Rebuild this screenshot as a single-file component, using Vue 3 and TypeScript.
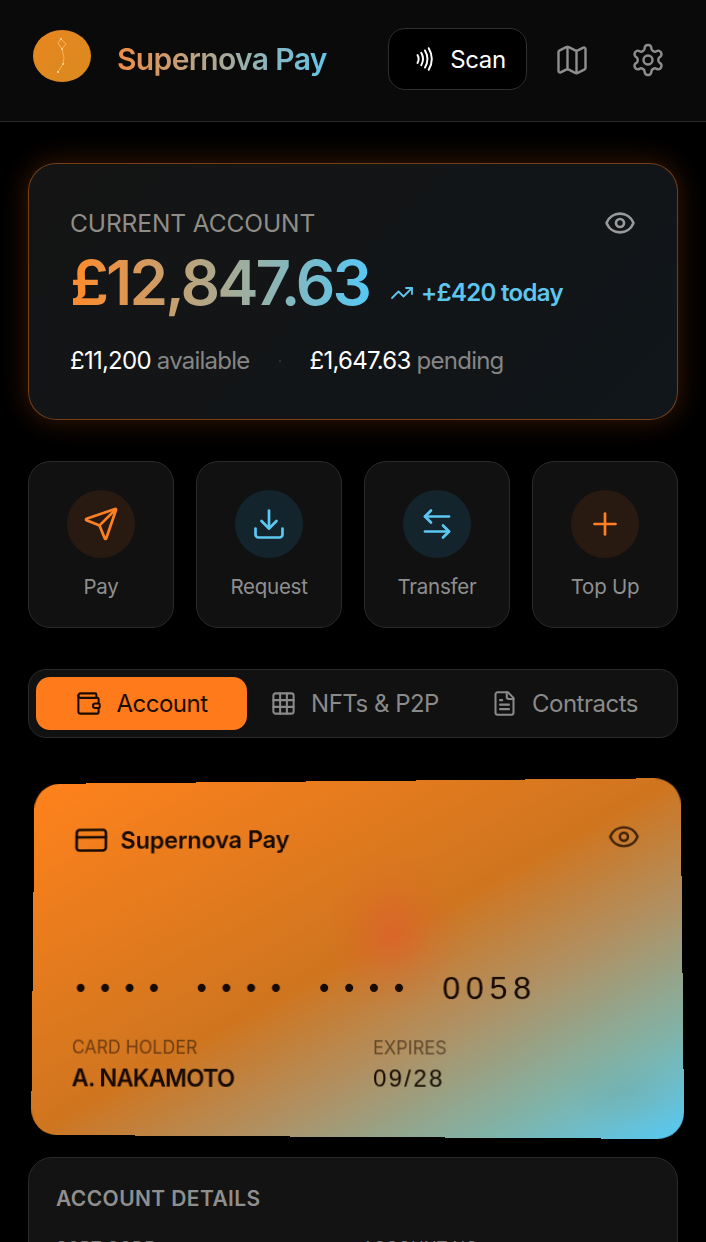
<script setup lang="ts">
interface Action {
  label: string
  tone: 'orange' | 'blue'
  paths: string[]
}

interface Tab {
  label: string
  active?: boolean
  paths: string[]
}

const eyePaths = [
  'M2.062 12.348a1 1 0 0 1 0-.696 10.75 10.75 0 0 1 19.876 0 1 1 0 0 1 0 .696 10.75 10.75 0 0 1-19.876 0',
  'M15 12a3 3 0 1 1-6 0 3 3 0 0 1 6 0',
]

const actions: Action[] = [
  {
    label: 'Pay',
    tone: 'orange',
    paths: [
      'M14.536 21.686a.5.5 0 0 0 .937-.024l6.5-19a.496.496 0 0 0-.635-.635l-19 6.5a.5.5 0 0 0-.024.937l7.93 3.18a2 2 0 0 1 1.112 1.11z',
      'm21.854 2.147-10.94 10.939',
    ],
  },
  {
    label: 'Request',
    tone: 'blue',
    paths: ['M21 15v4a2 2 0 0 1-2 2H5a2 2 0 0 1-2-2v-4', 'M7 10l5 5 5-5', 'M12 15V3'],
  },
  {
    label: 'Transfer',
    tone: 'blue',
    paths: ['M8 3 4 7l4 4', 'M4 7h16', 'm16 21 4-4-4-4', 'M20 17H4'],
  },
  {
    label: 'Top Up',
    tone: 'orange',
    paths: ['M5 12h14', 'M12 5v14'],
  },
]

const tabs: Tab[] = [
  {
    label: 'Account',
    active: true,
    paths: [
      'M19 7V4a1 1 0 0 0-1-1H5a2 2 0 0 0 0 4h15a1 1 0 0 1 1 1v4h-3a2 2 0 0 0 0 4h3a1 1 0 0 0 1-1v-2a1 1 0 0 0-1-1',
      'M3 5v14a2 2 0 0 0 2 2h15a1 1 0 0 0 1-1v-4',
    ],
  },
  {
    label: 'NFTs & P2P',
    paths: [
      'M5 3h14a2 2 0 0 1 2 2v14a2 2 0 0 1-2 2H5a2 2 0 0 1-2-2V5a2 2 0 0 1 2-2z',
      'M3 9h18',
      'M3 15h18',
      'M9 3v18',
      'M15 3v18',
    ],
  },
  {
    label: 'Contracts',
    paths: [
      'M15 2H6a2 2 0 0 0-2 2v16a2 2 0 0 0 2 2h12a2 2 0 0 0 2-2V7Z',
      'M14 2v4a2 2 0 0 0 2 2h4',
      'M10 9H8',
      'M16 13H8',
      'M16 17H8',
    ],
  },
]
</script>

<template>
  <div class="app">
    <header class="topbar">
      <svg class="logo" viewBox="0 0 58 52">
        <ellipse cx="29" cy="26" rx="29" ry="26" fill="url(#logoFill)" />
        <defs>
          <linearGradient id="logoFill" x1="0" y1="0" x2="1" y2="1">
            <stop offset="0" stop-color="#e8861f" />
            <stop offset="1" stop-color="#d98a20" />
          </linearGradient>
        </defs>
        <path d="M28 9l5 5-4 5 2 9-1 6-5 8M28 9l-3 4 4 6" fill="none" stroke="#ffc56e" stroke-width="0.7" />
        <circle cx="28" cy="9" r="0.9" fill="#ffe0a0" />
        <circle cx="29" cy="19" r="0.9" fill="#ffe0a0" />
        <circle cx="30" cy="34" r="0.9" fill="#ffe0a0" />
        <circle cx="25" cy="42" r="1.1" fill="#ffe0a0" />
      </svg>
      <span class="brand">Supernova Pay</span>
      <button class="scan">
        <svg class="icon-scan" viewBox="0 0 24 24">
          <path d="M6 8.32a7.43 7.43 0 0 1 0 7.36" />
          <path d="M9.46 6.21a11.76 11.76 0 0 1 0 11.58" />
          <path d="M12.91 4.1a15.91 15.91 0 0 1 .01 15.8" />
          <path d="M16.37 2a20.16 20.16 0 0 1 0 20" />
        </svg>
        Scan
      </button>
      <svg class="icon-top map" viewBox="0 0 24 24">
        <path d="M14.106 5.553a2 2 0 0 0 1.788 0l3.659-1.83A1 1 0 0 1 21 4.619v12.764a1 1 0 0 1-.553.894l-4.553 2.277a2 2 0 0 1-1.788 0l-4.212-2.106a2 2 0 0 0-1.788 0l-3.659 1.83A1 1 0 0 1 3 19.381V6.618a1 1 0 0 1 .553-.894l4.553-2.277a2 2 0 0 1 1.788 0z" />
        <path d="M15 5.764v15" />
        <path d="M9 3.236v15" />
      </svg>
      <svg class="icon-top" viewBox="0 0 24 24">
        <path d="M12.22 2h-.44a2 2 0 0 0-2 2v.18a2 2 0 0 1-1 1.73l-.43.25a2 2 0 0 1-2 0l-.15-.08a2 2 0 0 0-2.73.73l-.22.38a2 2 0 0 0 .73 2.73l.15.1a2 2 0 0 1 1 1.72v.51a2 2 0 0 1-1 1.74l-.15.09a2 2 0 0 0-.73 2.73l.22.38a2 2 0 0 0 2.73.73l.15-.08a2 2 0 0 1 2 0l.43.25a2 2 0 0 1 1 1.73V20a2 2 0 0 0 2 2h.44a2 2 0 0 0 2-2v-.18a2 2 0 0 1 1-1.73l.43-.25a2 2 0 0 1 2 0l.15.08a2 2 0 0 0 2.73-.73l.22-.39a2 2 0 0 0-.73-2.73l-.15-.08a2 2 0 0 1-1-1.74v-.5a2 2 0 0 1 1-1.74l.15-.09a2 2 0 0 0 .73-2.73l-.22-.38a2 2 0 0 0-2.73-.73l-.15.08a2 2 0 0 1-2 0l-.43-.25a2 2 0 0 1-1-1.73V4a2 2 0 0 0-2-2z" />
        <path d="M15 12a3 3 0 1 1-6 0 3 3 0 0 1 6 0" />
      </svg>
    </header>

    <main class="content">
      <section class="balance">
        <div class="balance-head">
          <span class="balance-label">CURRENT ACCOUNT</span>
          <svg class="balance-eye" viewBox="0 0 24 24">
            <path v-for="d in eyePaths" :key="d" :d="d" />
          </svg>
        </div>
        <div class="balance-row">
          <span class="amount">£12,847.63</span>
          <svg class="trend" viewBox="0 0 24 24">
            <path d="M22 7l-8.5 8.5-5-5L2 17" />
            <path d="M16 7h6v6" />
          </svg>
          <span class="today">+£420 today</span>
        </div>
        <div class="balance-foot">
          <span><b>£11,200</b> available</span>
          <i class="sep"></i>
          <span><b>£1,647.63</b> pending</span>
        </div>
      </section>

      <section class="actions">
        <button v-for="a in actions" :key="a.label" class="action">
          <span class="action-circle" :class="a.tone">
            <svg viewBox="0 0 24 24">
              <path v-for="d in a.paths" :key="d" :d="d" />
            </svg>
          </span>
          <span class="action-label">{{ a.label }}</span>
        </button>
      </section>

      <nav class="tabs">
        <button v-for="t in tabs" :key="t.label" class="tab" :class="{ active: t.active }">
          <svg viewBox="0 0 24 24">
            <path v-for="d in t.paths" :key="d" :d="d" />
          </svg>
          {{ t.label }}
        </button>
      </nav>

      <section class="card">
        <div class="card-head">
          <svg class="card-logo" viewBox="0 0 24 24">
            <path d="M4 5h16a2 2 0 0 1 2 2v10a2 2 0 0 1-2 2H4a2 2 0 0 1-2-2V7a2 2 0 0 1 2-2z" />
            <path d="M2 10h20" />
          </svg>
          <span class="card-brand">Supernova Pay</span>
          <svg class="card-eye" viewBox="0 0 24 24">
            <path v-for="d in eyePaths" :key="d" :d="d" />
          </svg>
        </div>
        <div class="card-number">
          <span class="dots">••••</span>
          <span class="dots">••••</span>
          <span class="dots">••••</span>
          <span class="last">0058</span>
        </div>
        <div class="card-foot">
          <div class="holder">
            <span class="card-label">CARD HOLDER</span>
            <span class="holder-name">A. NAKAMOTO</span>
          </div>
          <div>
            <span class="card-label">EXPIRES</span>
            <span class="expiry">09/28</span>
          </div>
        </div>
      </section>

      <section class="details">
        <h2>ACCOUNT DETAILS</h2>
        <div class="details-grid">
          <span>SORT CODE</span>
          <span>ACCOUNT NO.</span>
        </div>
      </section>
    </main>
  </div>
</template>

<style scoped>
.app {
  width: 706px;
  height: 1242px;
  overflow: hidden;
  background: #000;
  color: #fff;
  font-family: Inter, "Liberation Sans", sans-serif;
}

svg {
  fill: none;
  stroke: currentColor;
  stroke-width: 2;
  stroke-linecap: round;
  stroke-linejoin: round;
  flex-shrink: 0;
}

button {
  font-family: inherit;
  cursor: pointer;
}

.topbar {
  height: 122px;
  box-sizing: border-box;
  display: flex;
  align-items: center;
  padding: 0 40px 0 33px;
  background: #0a0a0a;
  border-bottom: 1px solid #2b2b2b;
}

.logo {
  width: 58px;
  height: 52px;
  stroke: none;
  margin-top: -9px;
}

.logo path {
  stroke-linecap: butt;
}

.brand {
  margin-left: 26px;
  font-size: 30px;
  font-weight: 600;
  letter-spacing: -0.65px;
  background: linear-gradient(90deg, #ef8d45, #63c5ec);
  -webkit-background-clip: text;
  background-clip: text;
  color: transparent;
  margin-top: -3px;
}

.scan {
  margin-left: auto;
  width: 139px;
  height: 62px;
  display: flex;
  align-items: center;
  justify-content: center;
  gap: 13px;
  padding: 0 0 0 2px;
  background: #000;
  border: 1px solid #2e2e2e;
  border-radius: 17px;
  color: #fff;
  font-size: 24px;
  font-weight: 400;
  letter-spacing: -0.4px;
  margin-top: -3px;
}

.icon-scan {
  width: 26px;
  height: 26px;
  stroke-width: 1.8;
}

.icon-top {
  width: 36px;
  height: 36px;
  stroke: #8f8f8f;
  stroke-width: 1.6;
  margin-left: 40px;
  margin-top: -2px;
}

.icon-top.map {
  margin-left: 27px;
}

.content {
  padding: 41px 28px 0;
  display: flex;
  flex-direction: column;
}

.balance {
  height: 257px;
  box-sizing: border-box;
  padding: 43px 41px 0;
  border: 1px solid rgba(255, 122, 26, 0.42);
  border-radius: 28px;
  background: linear-gradient(135deg, #141414, #11161a);
  box-shadow: 0 0 28px rgba(255, 110, 20, 0.24);
}

.balance-head {
  display: flex;
  align-items: center;
  justify-content: space-between;
}

.balance-label {
  font-size: 24.5px;
  line-height: 32px;
  color: #8f8d88;
  letter-spacing: -0.1px;
}

.balance-eye {
  width: 32px;
  height: 32px;
  stroke: #9a9a9a;
}

.balance-row {
  display: flex;
  align-items: center;
  margin-top: 4px;
}

.amount {
  font-size: 62px;
  line-height: 80px;
  font-weight: 600;
  letter-spacing: -2.9px;
  background: linear-gradient(90deg, #ff8a2a, #57c8f4);
  -webkit-background-clip: text;
  background-clip: text;
  color: transparent;
}

.trend {
  width: 24px;
  height: 24px;
  color: #5ec6ee;
  margin-left: 21px;
  margin-top: 20px;
  stroke-width: 1.8;
}

.today {
  margin-left: 7px;
  font-size: 24px;
  font-weight: 600;
  letter-spacing: -0.7px;
  color: #5ec6ee;
  margin-top: 19px;
}

.balance-foot {
  display: flex;
  align-items: center;
  margin-top: 22px;
  font-size: 24px;
  line-height: 32px;
  letter-spacing: -0.75px;
  color: #858585;
}

.balance-foot b {
  font-weight: 400;
  color: #fff;
}

.sep {
  width: 2px;
  height: 2px;
  margin: 0 29px;
  background: #333;
  border-radius: 50%;
}

.actions {
  display: grid;
  grid-template-columns: repeat(4, 1fr);
  gap: 22px;
  margin-top: 41px;
}

.action {
  height: 167px;
  padding: 28px 0 0;
  display: flex;
  flex-direction: column;
  align-items: center;
  background: #111;
  border: 1px solid #2a2a2a;
  border-radius: 22px;
}

.action-circle {
  width: 68px;
  height: 68px;
  border-radius: 50%;
  display: flex;
  align-items: center;
  justify-content: center;
}

.action-circle svg {
  width: 36px;
  height: 36px;
  stroke-width: 1.8;
}

.action-circle.orange {
  background: #281a11;
}

.action-circle.orange svg {
  color: #ff7f24;
}

.action-circle.blue {
  background: #14242c;
}

.action-circle.blue svg {
  color: #5cc8f2;
}

.action-label {
  margin-top: 15px;
  font-size: 20.5px;
  line-height: 28px;
  letter-spacing: -0.25px;
  color: #8f8f8f;
}

.tabs {
  height: 69px;
  box-sizing: border-box;
  display: flex;
  align-items: stretch;
  margin-top: 41px;
  padding: 7px;
  background: #111;
  border: 1px solid #2a2a2a;
  border-radius: 18px;
}

.tab {
  display: flex;
  align-items: center;
  justify-content: center;
  gap: 14px;
  padding: 0;
  background: none;
  border: none;
  border-radius: 14px;
  color: #8a8a8a;
  font-size: 24px;
  letter-spacing: -0.5px;
}

.tab:nth-child(1) {
  width: 211px;
}

.tab:nth-child(2) {
  width: 215px;
}

.tab:nth-child(3) {
  flex: 1;
  padding-right: 3px;
}

.tab svg {
  width: 27px;
  height: 27px;
  stroke-width: 1.8;
}

.tab.active {
  background: #ff7a1a;
  color: #1a0c02;
}

.card {
  height: 356px;
  box-sizing: border-box;
  margin-top: 42px;
  padding: 40px 41px 0;
  border-radius: 26px;
  color: #160a02;
  background:
    radial-gradient(ellipse 70px 80px at 56% 43%, rgba(226, 88, 50, 0.55) 0%, rgba(226, 88, 50, 0.14) 55%, transparent 100%),
    radial-gradient(ellipse 60px 36px at 91% 87%, rgba(110, 165, 160, 0.28), transparent),
    linear-gradient(to bottom right, #ff821c 0%, #cf751f 50%, #b09062 67%, #80b3a8 85%, #55c9f5 100%);
  transform: perspective(1000px) rotateX(1.8deg) rotateY(-2.5deg);
}

.card-head {
  display: flex;
  align-items: center;
}

.card-logo {
  width: 36px;
  height: 36px;
  stroke-width: 1.8;
}

.card-brand {
  margin-left: 12px;
  font-size: 24px;
  font-weight: 600;
  letter-spacing: -0.2px;
}

.card-eye {
  width: 32px;
  height: 32px;
  margin-left: auto;
  margin-right: -1px;
  stroke: #3c2108;
  stroke-width: 1.8;
}

.card-number {
  display: flex;
  align-items: center;
  gap: 23.5px;
  height: 40px;
  margin-top: 112px;
  font-family: "DejaVu Sans Mono", "Liberation Mono", monospace;
}

.dots {
  font-size: 28px;
  letter-spacing: 8.1px;
}

.last {
  margin-left: 3px;
  font-size: 32px;
  letter-spacing: 5.5px;
  font-family: "Liberation Sans", sans-serif;
}

.card-foot {
  display: flex;
  margin-top: 29px;
}

.holder {
  width: 304px;
}

.card-label {
  display: block;
  font-size: 18px;
  line-height: 22px;
  color: rgba(40, 20, 5, 0.6);
}

.holder-name {
  display: block;
  margin-top: 5px;
  font-size: 24px;
  font-weight: 600;
  letter-spacing: -0.8px;
}

.expiry {
  display: block;
  margin-top: 5px;
  font-family: "Liberation Sans", sans-serif;
  font-size: 24px;
  letter-spacing: 2.2px;
}

.details {
  height: 200px;
  box-sizing: border-box;
  margin-top: 21px;
  padding: 29px 27px 0;
  background: #131313;
  border: 1px solid #2a2a2a;
  border-radius: 24px;
}

.details h2 {
  margin: 0;
  font-size: 21px;
  line-height: 24px;
  font-weight: 600;
  letter-spacing: 0.4px;
  color: #8f8f8f;
}

.details-grid {
  display: grid;
  grid-template-columns: 306px 1fr;
  margin-top: 26px;
  font-size: 17px;
  line-height: 22px;
  color: #777;
}
</style>
